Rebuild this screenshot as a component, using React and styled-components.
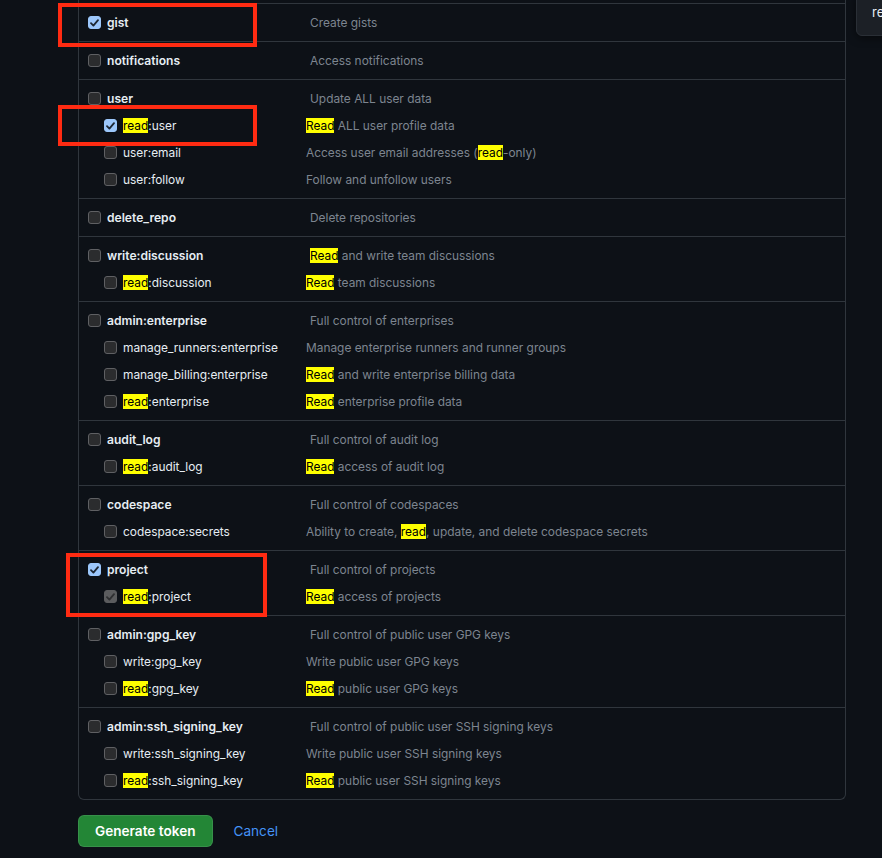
import React from "react";
import styled, { createGlobalStyle } from "styled-components";

const GlobalStyle = createGlobalStyle`
  html, body {
    margin: 0;
    padding: 0;
    background: #0d1117;
    overflow: hidden;
  }
  body {
    font-family: Inter, "Liberation Sans", Arial, sans-serif;
    color: #e6edf3;
  }
`;

const Stage = styled.div`
  position: relative;
  width: 882px;
  height: 858px;
  overflow: hidden;
`;

const Page = styled.div`
  display: flex;
  flex-direction: column;
  width: 768px;
  margin-left: 78px;
`;

/* The list continues above the visible area, so only its tail shows at the top. */
const Panel = styled.div`
  border: 1px solid #30363d;
  border-top: none;
  border-radius: 0 0 6px 6px;
  padding-top: 3px;
  display: flex;
  flex-direction: column;
`;

const Group = styled.div`
  display: flex;
  flex-direction: column;
  gap: 7px;
  padding: 9px 0 8px 9px;
  border-top: 1px solid #30363d;
`;

const Line = styled.div`
  display: grid;
  grid-template-columns: ${(p) => (p.$child ? "202px" : "222px")} 1fr;
  padding-left: ${(p) => (p.$child ? "16px" : "0")};
  height: 20px;
  line-height: 20px;
  font-size: 11.9px;
`;

const LabelCell = styled.label`
  display: flex;
  align-items: flex-start;
  gap: 6px;
  white-space: nowrap;
  font-weight: ${(p) => (p.$child ? 400 : 600)};
  font-size: ${(p) => (p.$child ? "11.9px" : "12.1px")};
  color: #e6edf3;
`;

const Box = styled.span`
  flex: none;
  box-sizing: border-box;
  width: 13px;
  height: 13px;
  margin-top: 3px;
  border-radius: 3px;
  display: flex;
  align-items: center;
  justify-content: center;
  background: ${(p) =>
    p.$checked ? (p.$disabled ? "#5b5c5e" : "#9cc7fb") : "#2b2c2e"};
  border: 1px solid
    ${(p) => (p.$checked ? (p.$disabled ? "#5b5c5e" : "#9cc7fb") : "#5f6063")};
`;

const Desc = styled.span`
  color: #7d8590;
  white-space: nowrap;
`;

const Mark = styled.mark`
  background: #ffff00;
  color: #000;
  padding: 0;
`;

const Actions = styled.div`
  display: flex;
  align-items: center;
  gap: 21px;
  margin-top: 15px;
`;

const PrimaryButton = styled.button`
  height: 32px;
  padding: 0 16px;
  border-radius: 6px;
  border: 1px solid rgba(240, 246, 252, 0.1);
  background: #238636;
  color: #ffffff;
  font-family: Inter, "Liberation Sans", Arial, sans-serif;
  font-size: 13.6px;
  font-weight: 600;
  cursor: pointer;
`;

const CancelLink = styled.a`
  color: #4493f8;
  font-size: 13.6px;
  text-decoration: none;
`;

const Annotation = styled.div`
  position: absolute;
  box-sizing: border-box;
  border: 4px solid #ff2b12;
  left: ${(p) => p.$x}px;
  top: ${(p) => p.$y}px;
  width: ${(p) => p.$w}px;
  height: ${(p) => p.$h}px;
  pointer-events: none;
`;

const Popover = styled.div`
  position: absolute;
  left: 856px;
  top: -8px;
  width: 60px;
  height: 44px;
  box-sizing: border-box;
  padding: 9px 0 0 15px;
  background: #1c2026;
  border: 1px solid #2a2f36;
  border-radius: 6px;
  box-shadow: 0 2px 8px rgba(0, 0, 0, 0.5);
  font-size: 13px;
  line-height: 20px;
  color: #e6edf3;
`;

function Highlight({ text }) {
  const parts = text.split(/(read)/i);
  return parts.map((part, i) =>
    /^read$/i.test(part) ? (
      <Mark key={i}>{part}</Mark>
    ) : (
      <React.Fragment key={i}>{part}</React.Fragment>
    )
  );
}

function Checkbox({ checked, disabled }) {
  return (
    <Box $checked={checked} $disabled={disabled}>
      {checked && (
        <svg width="9" height="8" viewBox="0 0 9 8">
          <path
            d="M1 4.2 L3.4 6.6 L8 1.2"
            fill="none"
            stroke={disabled ? "#2e2f31" : "#1d2733"}
            strokeWidth="1.8"
            strokeLinecap="round"
            strokeLinejoin="round"
          />
        </svg>
      )}
    </Box>
  );
}

function ScopeLine({ scope, child }) {
  return (
    <Line $child={child}>
      <LabelCell $child={child}>
        <Checkbox checked={scope.checked} disabled={scope.disabled} />
        <span>
          <Highlight text={scope.name} />
        </span>
      </LabelCell>
      <Desc>
        <Highlight text={scope.desc} />
      </Desc>
    </Line>
  );
}

const scopes = [
  { name: "gist", desc: "Create gists", checked: true },
  { name: "notifications", desc: "Access notifications" },
  {
    name: "user",
    desc: "Update ALL user data",
    children: [
      { name: "read:user", desc: "Read ALL user profile data", checked: true },
      { name: "user:email", desc: "Access user email addresses (read-only)" },
      { name: "user:follow", desc: "Follow and unfollow users" },
    ],
  },
  { name: "delete_repo", desc: "Delete repositories" },
  {
    name: "write:discussion",
    desc: "Read and write team discussions",
    children: [{ name: "read:discussion", desc: "Read team discussions" }],
  },
  {
    name: "admin:enterprise",
    desc: "Full control of enterprises",
    children: [
      { name: "manage_runners:enterprise", desc: "Manage enterprise runners and runner groups" },
      { name: "manage_billing:enterprise", desc: "Read and write enterprise billing data" },
      { name: "read:enterprise", desc: "Read enterprise profile data" },
    ],
  },
  {
    name: "audit_log",
    desc: "Full control of audit log",
    children: [{ name: "read:audit_log", desc: "Read access of audit log" }],
  },
  {
    name: "codespace",
    desc: "Full control of codespaces",
    children: [
      {
        name: "codespace:secrets",
        desc: "Ability to create, read, update, and delete codespace secrets",
      },
    ],
  },
  {
    name: "project",
    desc: "Full control of projects",
    checked: true,
    children: [
      { name: "read:project", desc: "Read access of projects", checked: true, disabled: true },
    ],
  },
  {
    name: "admin:gpg_key",
    desc: "Full control of public user GPG keys",
    children: [
      { name: "write:gpg_key", desc: "Write public user GPG keys" },
      { name: "read:gpg_key", desc: "Read public user GPG keys" },
    ],
  },
  {
    name: "admin:ssh_signing_key",
    desc: "Full control of public user SSH signing keys",
    children: [
      { name: "write:ssh_signing_key", desc: "Write public user SSH signing keys" },
      { name: "read:ssh_signing_key", desc: "Read public user SSH signing keys" },
    ],
  },
];

export default function App() {
  return (
    <>
      <GlobalStyle />
      <Stage>
        <Page>
          <Panel>
            {scopes.map((s) => (
              <Group key={s.name}>
                <ScopeLine scope={s} />
                {(s.children || []).map((c) => (
                  <ScopeLine key={c.name} scope={c} child />
                ))}
              </Group>
            ))}
          </Panel>
          <Actions>
            <PrimaryButton>Generate token</PrimaryButton>
            <CancelLink href="#">Cancel</CancelLink>
          </Actions>
        </Page>
        <Annotation $x={58} $y={3} $w={199} $h={44} />
        <Annotation $x={58} $y={105} $w={199} $h={41} />
        <Annotation $x={66} $y={553} $w={201} $h={64} />
        <Popover>re</Popover>
      </Stage>
    </>
  );
}
